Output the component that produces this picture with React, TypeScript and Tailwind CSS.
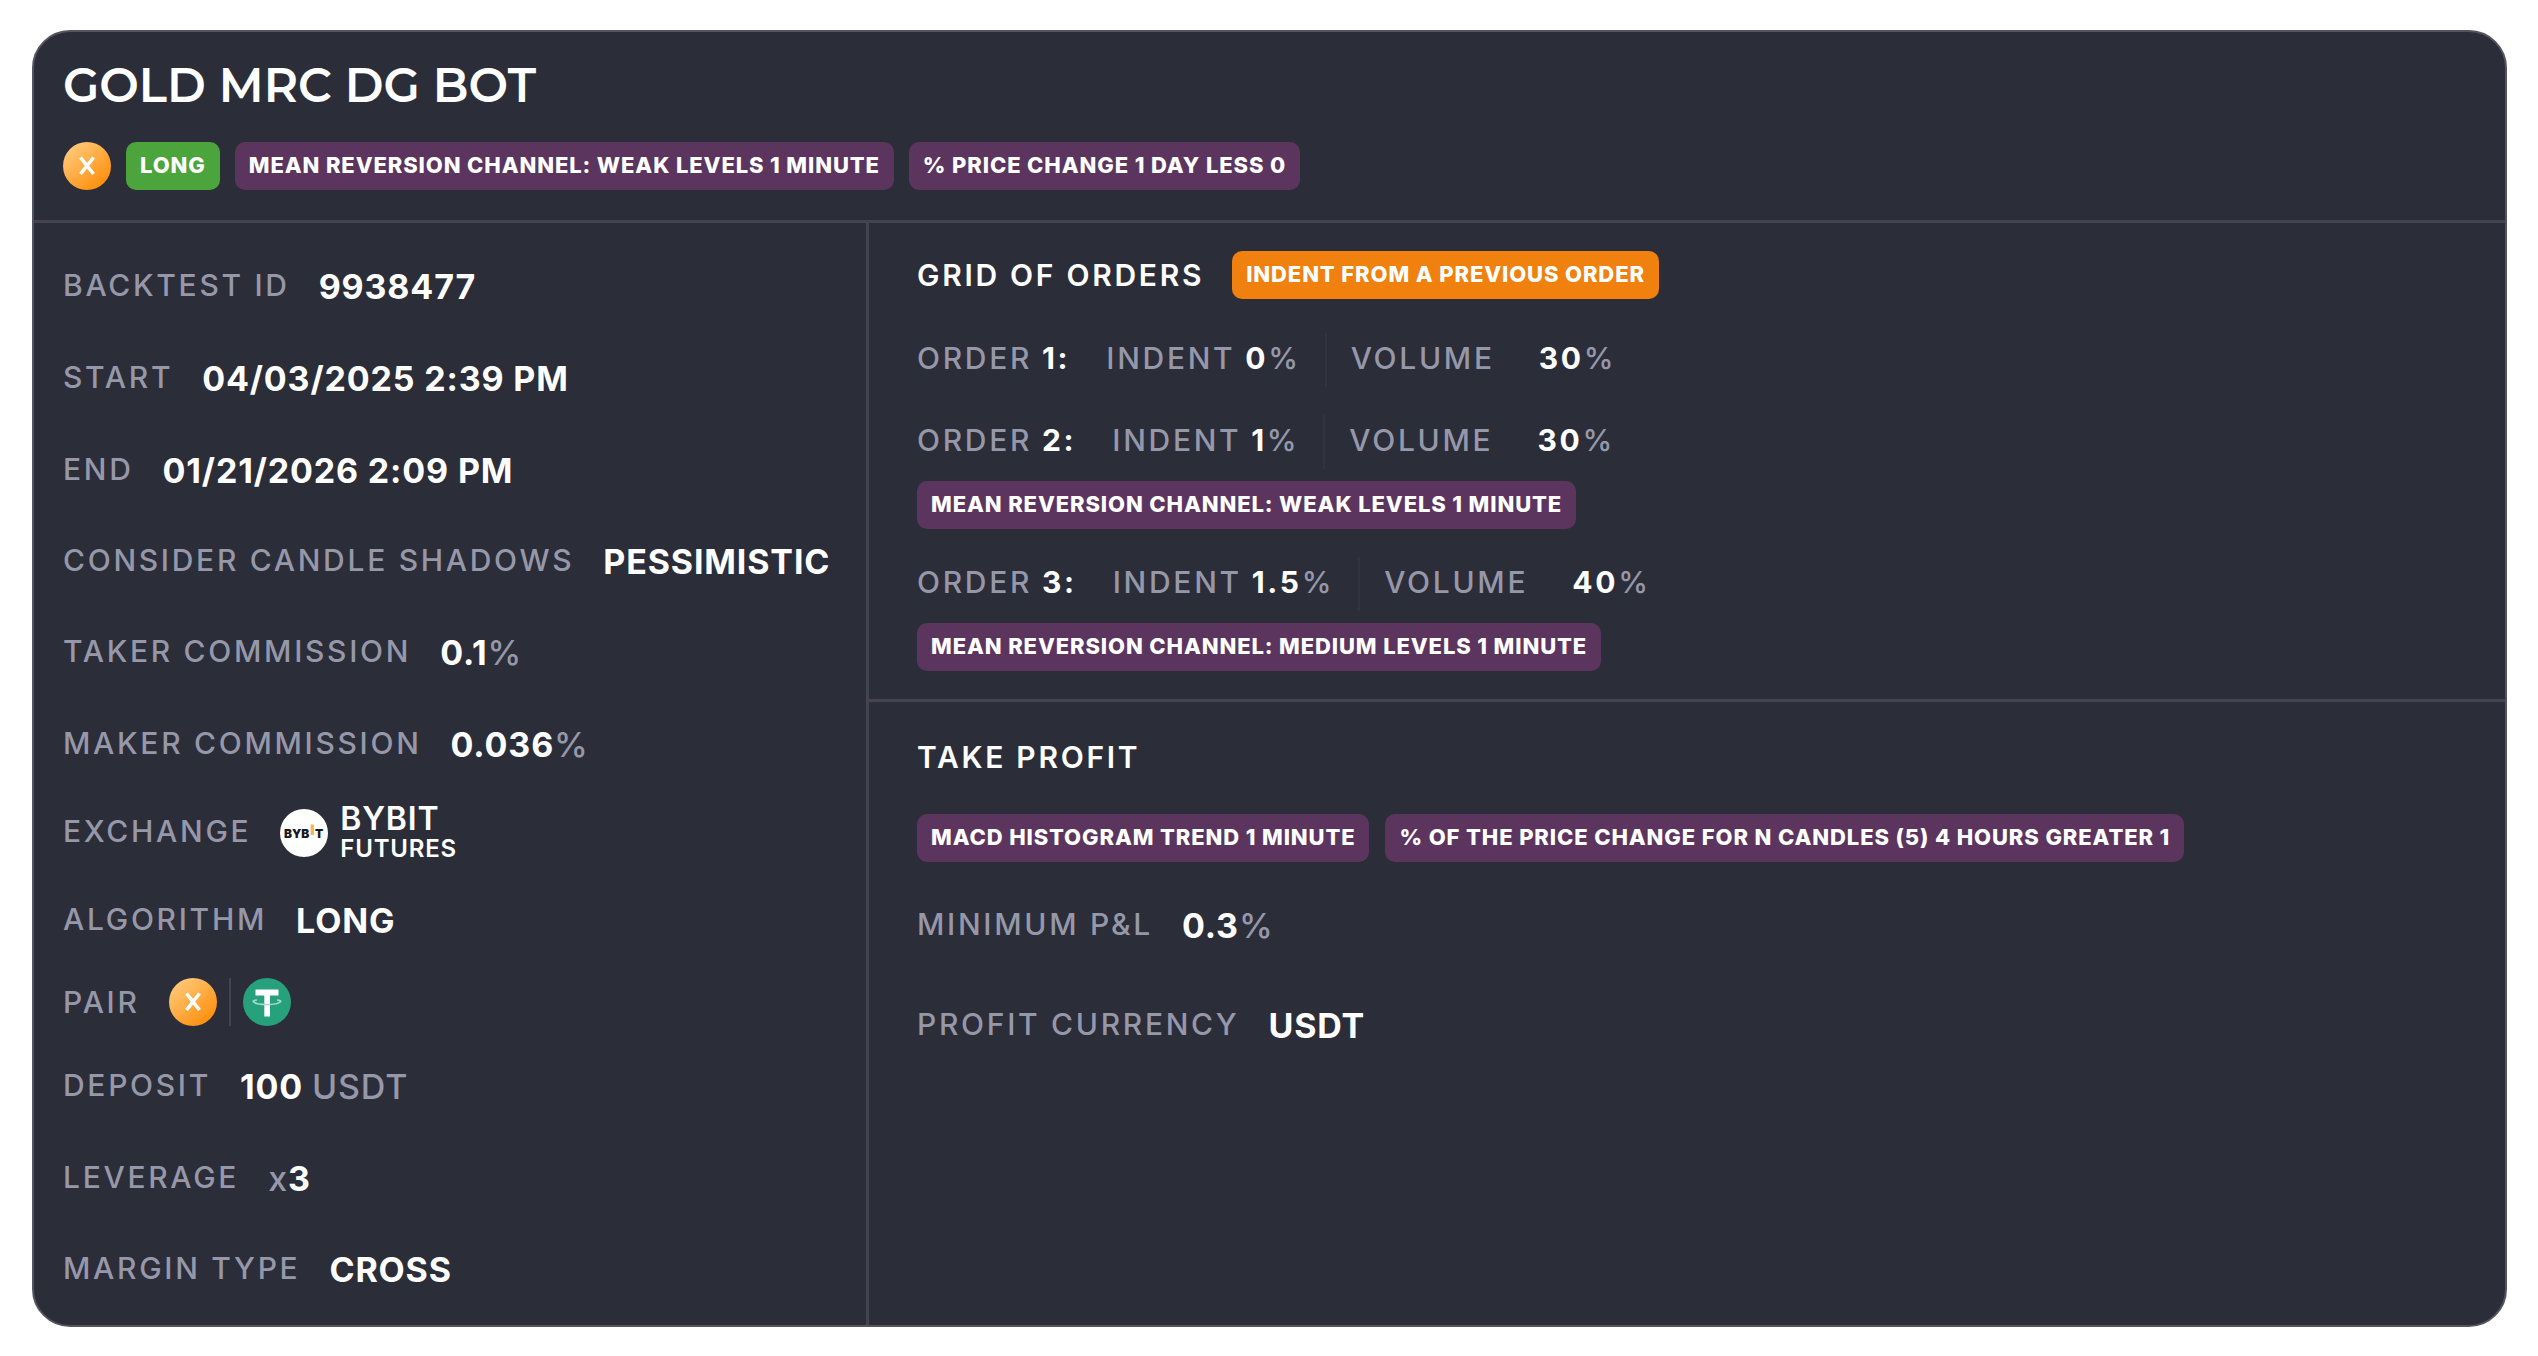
import type { ReactNode } from "react";

const tones = {
  purple: "bg-[#5c355f]",
  green: "bg-[#4ba43c]",
  orange: "bg-[#f0810f]",
};

function Badge({ tone = "purple", children }: { tone?: keyof typeof tones; children: ReactNode }) {
  return (
    <span
      className={`inline-flex h-12 items-center whitespace-nowrap rounded-[10px] px-3.5 pb-0.5 text-[22px] font-extrabold uppercase leading-none tracking-[0.04em] text-white ${tones[tone]}`}
    >
      {children}
    </span>
  );
}

function CoinX() {
  return (
    <svg className="size-12 shrink-0" viewBox="0 0 48 48" role="img" aria-label="X coin">
      <defs>
        <linearGradient id="coin" x1="0.15" y1="0.1" x2="0.85" y2="0.95">
          <stop offset="0" stopColor="#ffc877" />
          <stop offset="1" stopColor="#ff8c08" />
        </linearGradient>
      </defs>
      <circle cx="24" cy="24" r="24" fill="url(#coin)" />
      <path d="M17.5 15.5 L30.5 32 M30.5 15.5 L17.5 32" stroke="#fff" strokeWidth="3.6" fill="none" />
    </svg>
  );
}

function Tether() {
  return (
    <svg className="size-12 shrink-0" viewBox="0 0 48 48" role="img" aria-label="Tether">
      <circle cx="24" cy="24" r="24" fill="#26a17b" />
      <path d="M12.5 11.5 H35.5 V17.5 H27 V38.5 H21.3 V17.5 H12.5 Z" fill="#fff" />
      <path
        d="M14 22 C11 22.4 10 23 10.4 23.8 C12 25.4 17 26.6 24 26.6 C31 26.6 36 25.4 37.6 23.8 C38 23 37 22.4 34 22"
        fill="none"
        stroke="#a9dccb"
        strokeWidth="1.6"
      />
    </svg>
  );
}

function BybitLogo() {
  return (
    <svg className="size-12 shrink-0" viewBox="0 0 48 48" role="img" aria-label="Bybit logo">
      <circle cx="24" cy="24" r="24" fill="#fff" />
      <g fontFamily="Inter, sans-serif" fontSize="12" fontWeight="900" fill="#17181e">
        <text x="4" y="29">BYB</text>
        <text x="35" y="29">T</text>
      </g>
      <rect x="30.6" y="15.5" width="3.4" height="10.5" fill="#f7b653" />
    </svg>
  );
}

function Label({ children }: { children: ReactNode }) {
  return <span className="text-[30px] font-medium uppercase leading-9 tracking-[0.09em] text-[#9698a9]">{children}</span>;
}

function Muted({ children }: { children: ReactNode }) {
  return <span className="font-medium text-[#9698a9]">{children}</span>;
}

function Value({ children }: { children: ReactNode }) {
  return <span className="whitespace-nowrap pt-1 text-[34px] font-bold leading-10 tracking-wide text-white">{children}</span>;
}

const rowHeights = {
  text: "h-[92px]",
  choice: "h-[90px]",
  exchange: "h-[84px]",
  pair: "h-[74px]",
  roomy: "h-[100px]",
};

function Row({ label, size = "text", children }: { label: string; size?: keyof typeof rowHeights; children: ReactNode }) {
  return (
    <div className={`flex items-center gap-[29px] ${rowHeights[size]}`}>
      <dt className="whitespace-nowrap">
        <Label>{label}</Label>
      </dt>
      <dd className="flex items-center">{children}</dd>
    </div>
  );
}

function Order({ index, indent, volume, signal }: { index: number; indent: string; volume: string; signal?: string }) {
  return (
    <li>
      <div className="flex h-[54px] items-center whitespace-nowrap pb-1 text-[30px] font-bold leading-9 tracking-[0.09em] text-white">
        <span className="mr-9">
          <Muted>ORDER</Muted> {index}:
        </span>
        <span className="mr-6">
          <Muted>INDENT</Muted> {indent}
          <Muted>%</Muted>
        </span>
        <span className="mr-6 h-[54px] w-0.5 self-start bg-[#32333f]" />
        <span className="mr-11">
          <Muted>VOLUME</Muted>
        </span>
        <span>
          {volume}
          <Muted>%</Muted>
        </span>
      </div>
      {signal && (
        <div className="mt-3 flex">
          <Badge>{signal}</Badge>
        </div>
      )}
    </li>
  );
}

function SectionTitle({ children }: { children: ReactNode }) {
  return <h2 className="text-[30px] font-semibold uppercase leading-[42px] tracking-[0.09em] text-white">{children}</h2>;
}

export default function App() {
  return (
    <div className="flex min-h-screen bg-white pb-[29px] pl-8 pr-[31px] pt-[30px] font-['Inter',sans-serif]">
      <main className="flex flex-1 flex-col overflow-hidden rounded-[38px] border-2 border-[#54555f] bg-[#2b2d39]">
        <header className="border-b-3 border-[#434450] px-[29px] pb-[30px] pt-6">
          <h1 className="text-[47px] font-semibold leading-[60px] text-white [font-family:Montserrat,Inter,sans-serif]">GOLD MRC DG BOT</h1>
          <div className="mt-[26px] flex items-center gap-[15px]">
            <CoinX />
            <Badge tone="green">Long</Badge>
            <Badge>Mean reversion channel: weak levels 1 minute</Badge>
            <Badge>% price change 1 day less 0</Badge>
          </div>
        </header>

        <div className="grid flex-1 grid-cols-[835px_1fr]">
          <dl className="border-r-3 border-[#434450] px-[29px] pt-4">
            <Row label="Backtest ID">
              <Value>9938477</Value>
            </Row>
            <Row label="Start">
              <Value>04/03/2025 2:39 PM</Value>
            </Row>
            <Row label="End">
              <Value>01/21/2026 2:09 PM</Value>
            </Row>
            <Row label="Consider candle shadows" size="choice">
              <Value>PESSIMISTIC</Value>
            </Row>
            <Row label="Taker commission">
              <Value>
                0.1<Muted>%</Muted>
              </Value>
            </Row>
            <Row label="Maker commission">
              <Value>
                0.036<Muted>%</Muted>
              </Value>
            </Row>
            <Row label="Exchange" size="exchange">
              <div className="flex items-center gap-3 pt-1">
                <BybitLogo />
                <div className="flex flex-col font-semibold tracking-wider text-white">
                  <span className="text-[32px] leading-8">BYBIT</span>
                  <span className="text-[24px] leading-7">FUTURES</span>
                </div>
              </div>
            </Row>
            <Row label="Algorithm">
              <Value>LONG</Value>
            </Row>
            <Row label="Pair" size="pair">
              <div className="flex items-center gap-3">
                <CoinX />
                <span className="h-12 w-0.5 bg-[#434450]" />
                <Tether />
              </div>
            </Row>
            <Row label="Deposit">
              <Value>
                100 <Muted>USDT</Muted>
              </Value>
            </Row>
            <Row label="Leverage">
              <Value>
                <Muted>x</Muted>3
              </Value>
            </Row>
            <Row label="Margin type" size="choice">
              <Value>CROSS</Value>
            </Row>
          </dl>

          <div>
            <section className="border-b-3 border-[#434450] px-12 py-7">
              <div className="flex items-center gap-7">
                <SectionTitle>Grid of orders</SectionTitle>
                <Badge tone="orange">Indent from a previous order</Badge>
              </div>
              <ol className="mt-[34px] flex flex-col gap-7">
                <Order index={1} indent="0" volume="30" />
                <Order index={2} indent="1" volume="30" signal="Mean reversion channel: weak levels 1 minute" />
                <Order index={3} indent="1.5" volume="40" signal="Mean reversion channel: medium levels 1 minute" />
              </ol>
            </section>
            <section className="px-12 pt-[34px]">
              <SectionTitle>Take profit</SectionTitle>
              <div className="mt-9 flex flex-wrap gap-4">
                <Badge>MACD histogram trend 1 minute</Badge>
                <Badge>% of the price change for N candles (5) 4 hours greater 1</Badge>
              </div>
              <dl className="mt-3">
                <Row label="Minimum P&L" size="roomy">
                  <Value>
                    0.3<Muted>%</Muted>
                  </Value>
                </Row>
                <Row label="Profit currency" size="roomy">
                  <Value>USDT</Value>
                </Row>
              </dl>
            </section>
          </div>
        </div>
      </main>
    </div>
  );
}
